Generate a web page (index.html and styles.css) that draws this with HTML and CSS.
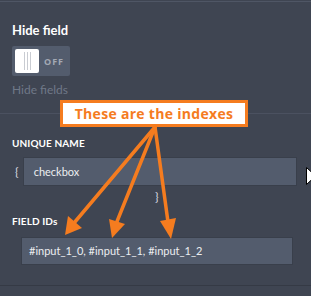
FILE: index.html
```html
<!DOCTYPE html>
<html>
<head>
<meta charset="utf-8">
<link rel="stylesheet" href="styles.css">
</head>
<body>
<div class="page">
  <div class="topline"></div>
  <section class="sec-hide">
    <div class="title">Hide field</div>
    <div class="toggle">
      <div class="knob"><span></span><span></span><span></span></div>
      <div class="off">OFF</div>
    </div>
    <div class="hint">Hide fields</div>
  </section>
  <div class="divider"></div>
  <section class="sec-name">
    <div class="label">UNIQUE NAME</div>
    <div class="row">
      <span class="brace">{</span>
      <div class="input">checkbox</div>
    </div>
    <div class="brace-close">}</div>
    <div class="label label-ids">FIELD IDs</div>
    <div class="input input-ids">#input_1_0, #input_1_1, #input_1_2</div>
  </section>
  <div class="bottomline"></div>

  <div class="callout">These are the indexes</div>
  <svg class="arrows" width="311" height="296" viewBox="0 0 311 296">
    <g stroke="#f57c1f" stroke-width="3.5" stroke-linecap="round" fill="none">
      <line x1="155" y1="127" x2="74" y2="223"/>
      <line x1="155" y1="127" x2="116" y2="224"/>
      <line x1="155" y1="127" x2="168" y2="222"/>
    </g>
    <g fill="#f57c1f">
      <polygon points="65,235 68,216 82,228"/>
      <polygon points="112,238 109,219 125,224"/>
      <polygon points="171,239 160,221 176,218"/>
    </g>
  </svg>
  <svg class="cursor" width="8" height="18" viewBox="0 0 8 18">
    <polygon points="0.5,0.5 7.5,7 7.5,11 0.5,17.5" fill="#fff" stroke="#000" stroke-width="1"/>
  </svg>
</div>
</body>
</html>
```

FILE: styles.css
```css
html, body {
  margin: 0;
  padding: 0;
}
body {
  background: #3f4552;
  font-family: Lato, "Open Sans", "Liberation Sans", sans-serif;
}
.page {
  position: relative;
  width: 311px;
  height: 296px;
  overflow: hidden;
  background: #3f4552;
}
.topline {
  height: 1px;
  margin-top: 1px;
  background: #4f5665;
}
.sec-hide {
  padding: 0 12px;
}
.title {
  margin-top: 19px;
  font-size: 13px;
  line-height: 18px;
  font-weight: 700;
  color: #ffffff;
}
.toggle {
  margin-top: 7px;
  width: 58px;
  height: 30px;
  box-sizing: border-box;
  padding: 3px;
  background: #535c6d;
  border-radius: 2px;
  display: flex;
  align-items: center;
  gap: 5px;
}
.knob {
  width: 24px;
  height: 24px;
  background: #ffffff;
  border-radius: 2px;
  display: flex;
  justify-content: center;
  align-items: center;
  gap: 2px;
}
.knob span {
  width: 1px;
  height: 18px;
  background: #c9ccd2;
}
.off {
  font-family: "Open Sans", sans-serif;
  font-size: 9px;
  font-weight: 700;
  letter-spacing: 1px;
  color: #a3a9b4;
}
.hint {
  margin-top: 6px;
  font-size: 12px;
  line-height: 16px;
  color: #6f7888;
}
.divider {
  margin-top: 15px;
  height: 1px;
  background: #4b5160;
}
.sec-name {
  padding: 0 12px;
}
.label {
  margin-top: 23px;
  font-size: 10px;
  line-height: 12px;
  font-weight: 700;
  color: #ffffff;
  letter-spacing: 0.1px;
}
.row {
  margin-top: 8px;
  display: flex;
  align-items: center;
  gap: 4px;
}
.brace {
  margin-left: 3px;
  font-size: 12px;
  color: #d8dbe0;
}
.input {
  height: 29px;
  box-sizing: border-box;
  background: #535c6d;
  border: 1px solid #393f4b;
  color: #eceef1;
  font-size: 11px;
  line-height: 27px;
  padding-left: 10px;
}
.row .input {
  width: 274px;
}
.brace-close {
  margin: 4px 0 0 143px;
  font-size: 12px;
  line-height: 14px;
  color: #d8dbe0;
}
.label-ids {
  margin-top: 11px;
}
.input-ids {
  margin-top: 10px;
  margin-left: 9px;
  width: 272px;
  height: 28px;
  line-height: 26px;
  padding-left: 7px;
}
.bottomline {
  margin-top: 20px;
  height: 1px;
  background: #353a45;
}
.callout {
  position: absolute;
  left: 60px;
  top: 100px;
  width: 188px;
  height: 27px;
  box-sizing: border-box;
  border: 3px solid #f57c1f;
  background: #ffffff;
  color: #f57c1f;
  font-family: "Open Sans", sans-serif;
  font-size: 14px;
  font-weight: 700;
  text-align: center;
  line-height: 21px;
  letter-spacing: 0.3px;
}
.arrows {
  position: absolute;
  left: 0;
  top: 0;
}
.cursor {
  position: absolute;
  left: 306px;
  top: 167px;
}
```
